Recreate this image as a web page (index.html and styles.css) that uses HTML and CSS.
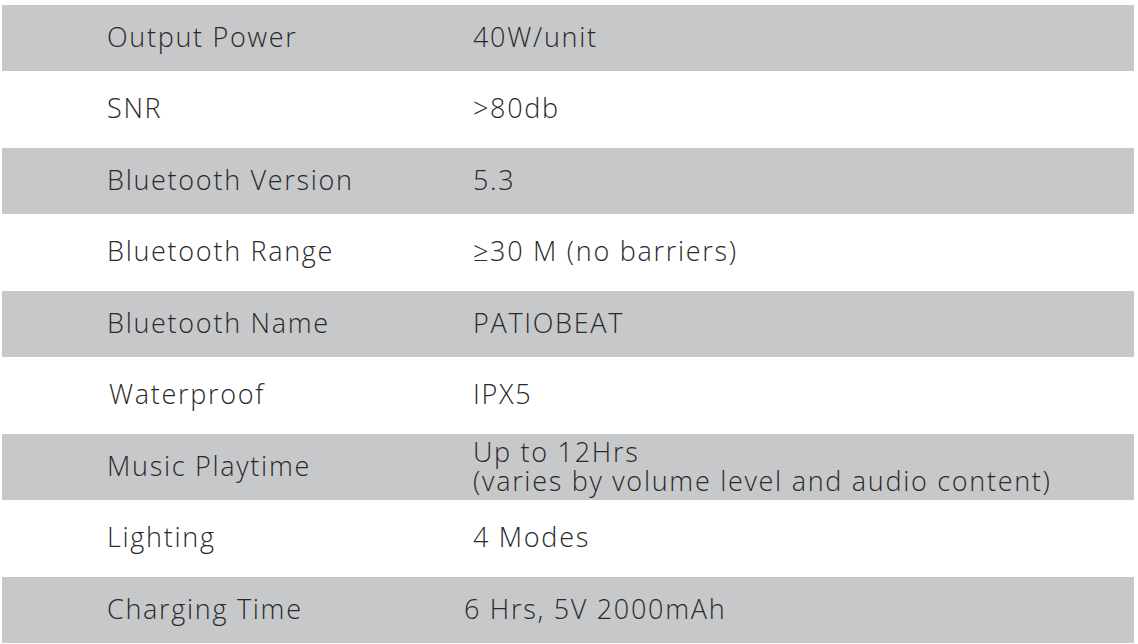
FILE: index.html
```html
<!DOCTYPE html>
<html lang="en">
<head>
<meta charset="utf-8">
<title>Specifications</title>
<link rel="stylesheet" href="styles.css">
</head>
<body>
<div class="specs">
  <div class="row shade"><div class="label">Output Power</div><div class="value">40W/unit</div></div>
  <div class="row"><div class="label">SNR</div><div class="value">&gt;80db</div></div>
  <div class="row shade"><div class="label">Bluetooth Version</div><div class="value">5.3</div></div>
  <div class="row"><div class="label">Bluetooth Range</div><div class="value">≥30 M (no barriers)</div></div>
  <div class="row shade"><div class="label">Bluetooth Name</div><div class="value">PATIOBEAT</div></div>
  <div class="row"><div class="label nudge">Waterproof</div><div class="value">IPX5</div></div>
  <div class="row shade"><div class="label">Music Playtime</div><div class="value multi">Up to 12Hrs<br>(varies by volume level and audio content)</div></div>
  <div class="row"><div class="label">Lighting</div><div class="value">4 Modes</div></div>
  <div class="row shade"><div class="label">Charging Time</div><div class="value left">6 Hrs, 5V 2000mAh</div></div>
</div>
</body>
</html>
```
FILE: styles.css
```css
html, body {
  margin: 0;
  padding: 0;
  background: #ffffff;
}
.specs {
  padding: 5px 4px 0 2px;
  font-family: "Open Sans", "Liberation Sans", sans-serif;
  font-weight: 300;
  font-size: 27px;
  color: #2a2a2a;
  letter-spacing: 1.7px;
}
.row {
  display: grid;
  grid-template-columns: 471px 1fr;
  align-items: center;
  height: 77px;
  background: #ffffff;
}
.row.shade {
  height: 66px;
  background: #c7c8ca;
}
.label {
  padding-left: 105px;
  line-height: 30px;
  margin-top: -3px;
}
.label.nudge {
  padding-left: 107px;
}
.value {
  line-height: 30px;
  margin-top: -3px;
}
.value.multi {
  line-height: 29px;
  margin-top: -2px;
}
.value.left {
  margin-left: -9px;
}
```
